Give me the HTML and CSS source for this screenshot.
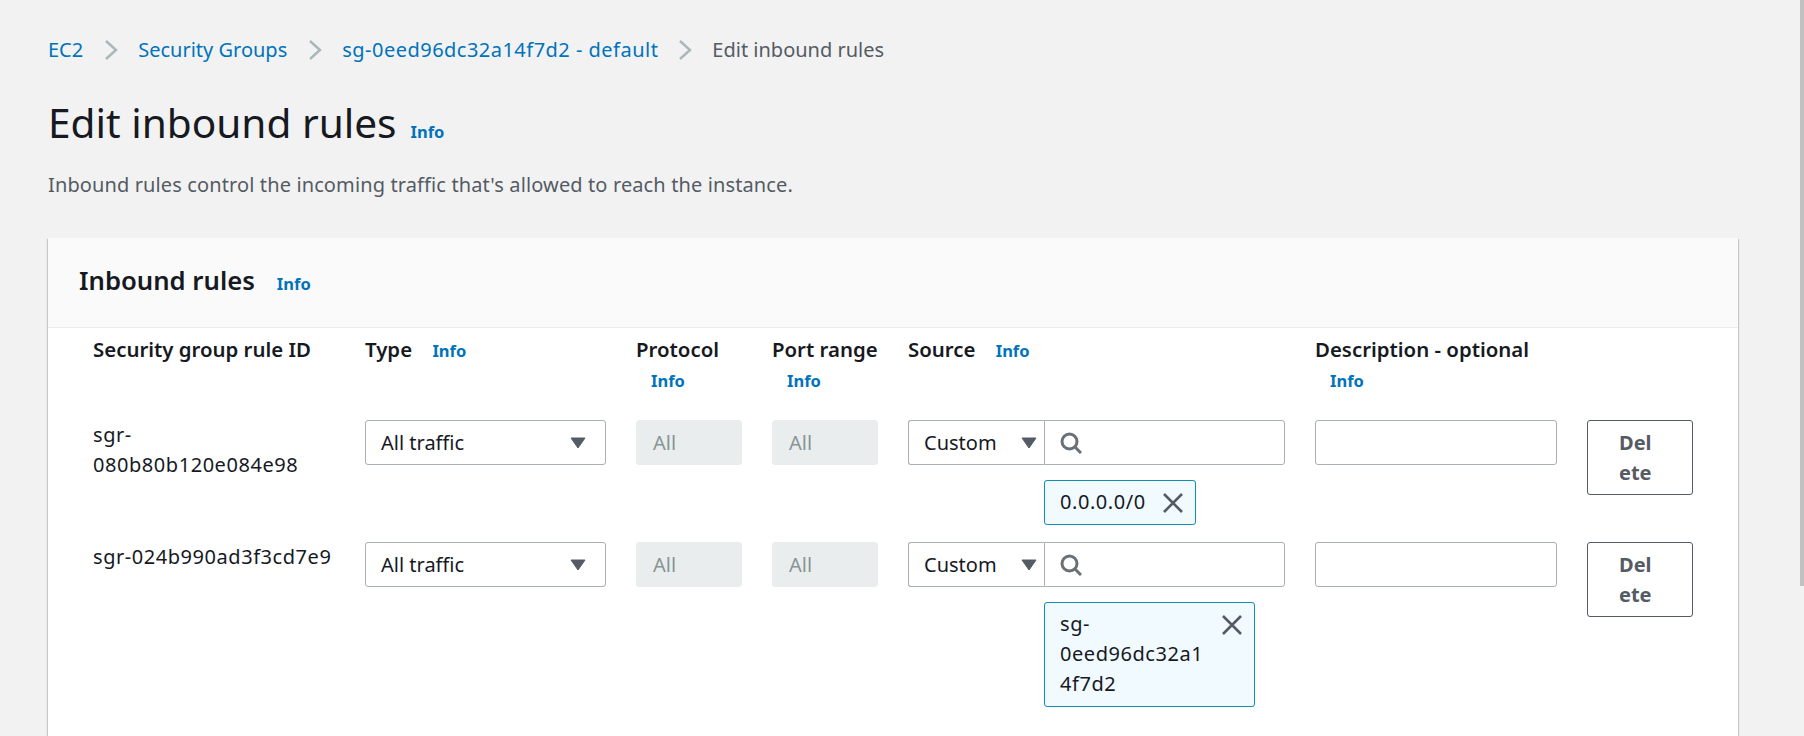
FILE: index.html
```html
<!DOCTYPE html>
<html lang="en">
<head>
  <meta charset="UTF-8">
  <title>Edit inbound rules</title>
  <link rel="stylesheet" href="styles.css">
</head>
<body>
  <div class="scrollbar"></div>
  <main class="page">
    <nav class="breadcrumb">
      <a href="#">EC2</a>
      <svg class="crumb-sep" viewBox="0 0 14 20"><path d="M2 1l10 9-10 9"/></svg>
      <a href="#">Security Groups</a>
      <svg class="crumb-sep" viewBox="0 0 14 20"><path d="M2 1l10 9-10 9"/></svg>
      <a href="#" class="id">sg-0eed96dc32a14f7d2 - default</a>
      <svg class="crumb-sep" viewBox="0 0 14 20"><path d="M2 1l10 9-10 9"/></svg>
      <span>Edit inbound rules</span>
    </nav>

    <div class="page-title">
      <h1>Edit inbound rules</h1>
      <a href="#" class="info">Info</a>
    </div>
    <p class="page-desc">Inbound rules control the incoming traffic that's allowed to reach the instance.</p>

    <section class="card">
      <header class="card-header">
        <h2>Inbound rules</h2>
        <a href="#" class="info">Info</a>
      </header>
      <div class="rules">
        <div class="head">Security group rule ID</div>
        <div class="head">Type <a href="#" class="info">Info</a></div>
        <div class="head">Protocol <a href="#" class="info wrapped">Info</a></div>
        <div class="head">Port range <a href="#" class="info wrapped">Info</a></div>
        <div class="head">Source <a href="#" class="info">Info</a></div>
        <div class="head">Description - optional <a href="#" class="info wrapped">Info</a></div>
        <div class="head"></div>

        <div class="rule-id id">sgr-080b80b120e084e98</div>
        <div class="field select">All traffic
          <svg class="arrow" viewBox="0 0 16 12"><path d="M1 1h14l-7 10z"/></svg>
        </div>
        <div class="field disabled">All</div>
        <div class="field disabled">All</div>
        <div class="source">
          <div class="source-inputs">
            <div class="field select custom">Custom
              <svg class="arrow" viewBox="0 0 16 12"><path d="M1 1h14l-7 10z"/></svg>
            </div>
            <div class="field search">
              <svg class="search-icon" viewBox="0 0 22 22"><circle cx="9.5" cy="9.5" r="7.5"/><path d="M15 15l6 6"/></svg>
            </div>
          </div>
          <div class="tag">
            <span class="tag-text id">0.0.0.0/0</span>
            <svg class="tag-close" viewBox="0 0 20 20"><path d="M1 1l18 18M19 1L1 19"/></svg>
          </div>
        </div>
        <div class="field"></div>
        <button class="delete">Delete</button>

        <div class="rule-id id">sgr-024b990ad3f3cd7e9</div>
        <div class="field select">All traffic
          <svg class="arrow" viewBox="0 0 16 12"><path d="M1 1h14l-7 10z"/></svg>
        </div>
        <div class="field disabled">All</div>
        <div class="field disabled">All</div>
        <div class="source">
          <div class="source-inputs">
            <div class="field select custom">Custom
              <svg class="arrow" viewBox="0 0 16 12"><path d="M1 1h14l-7 10z"/></svg>
            </div>
            <div class="field search">
              <svg class="search-icon" viewBox="0 0 22 22"><circle cx="9.5" cy="9.5" r="7.5"/><path d="M15 15l6 6"/></svg>
            </div>
          </div>
          <div class="tag tag-long">
            <span class="tag-text id">sg-0eed96dc32a14f7d2</span>
            <svg class="tag-close" viewBox="0 0 20 20"><path d="M1 1l18 18M19 1L1 19"/></svg>
          </div>
        </div>
        <div class="field"></div>
        <button class="delete">Delete</button>
      </div>
    </section>
  </main>
</body>
</html>
```

FILE: styles.css
```css
html, body {
  height: 100%;
  overflow: hidden;
}

body {
  margin: 0;
  background: #f2f2f2;
  color: #16191f;
  font-family: "Noto Sans", sans-serif;
  font-size: 20px;
  line-height: 30px;
}

a {
  color: #0073bb;
  text-decoration: none;
}

.id {
  letter-spacing: 0.55px;
}

.scrollbar {
  position: absolute;
  top: 0;
  right: 0;
  width: 4px;
  height: 586px;
  background: #c1c1c1;
}

.page {
  padding: 35px 66px 0 48px;
}

.breadcrumb {
  display: flex;
  align-items: center;
  gap: 20px;
  color: #545b64;
}

.breadcrumb a {
  margin-right: 1px;
}

.breadcrumb a.id {
  margin-right: 0;
  letter-spacing: 0.48px;
}

.crumb-sep {
  width: 14px;
  height: 20px;
  fill: none;
  stroke: #aab7b8;
  stroke-width: 2.4;
}

.page-title {
  display: flex;
  align-items: baseline;
  gap: 14px;
  margin-top: 31px;
}

h1 {
  margin: 0;
  font-size: 40.6px;
  font-weight: 400;
  line-height: 54px;
}

.info {
  font-size: 16.5px;
  font-weight: 700;
  letter-spacing: 0;
}

.page-desc {
  margin: 20px 0 0;
  color: #545b64;
  letter-spacing: 0.12px;
}

.card {
  margin-top: 38px;
  height: 600px;
  background: #fff;
  box-shadow: 0 1px 1px rgba(0, 28, 36, 0.3), 1px 1px 1px rgba(0, 28, 36, 0.15), -1px 1px 1px rgba(0, 28, 36, 0.15);
}

.card-header {
  display: flex;
  align-items: baseline;
  gap: 22px;
  height: 90px;
  padding: 25px 31px 0;
  box-sizing: border-box;
  background: #fafafa;
  border-bottom: 1px solid #eaeded;
}

h2 {
  margin: 0;
  font-size: 25.7px;
  font-weight: 600;
  line-height: 36px;
}

.rules {
  display: grid;
  grid-template-columns: 242px 241px 106px 106px 377px 242px 106px;
  column-gap: 30px;
  align-items: start;
  padding: 6px 0 0 45px;
}

.head {
  font-size: 20.4px;
  font-weight: 600;
  margin-bottom: 24px;
  min-height: 62px;
}

.head .info {
  margin-left: 15px;
}

.head .info.wrapped {
  display: block;
  margin-top: 2px;
  margin-left: 15px;
}

.rule-id {
  margin-bottom: 17px;
}

.field {
  height: 45px;
  box-sizing: border-box;
  display: flex;
  align-items: center;
  padding: 0 15px;
  background: #fff;
  border: 1px solid #a9afb2;
  border-radius: 3px;
}

.select {
  justify-content: space-between;
}

.arrow {
  width: 16px;
  height: 12px;
  fill: #545b64;
  stroke: #545b64;
  stroke-linejoin: round;
  margin-right: 4px;
}

.disabled {
  padding-left: 16px;
  background: #eaeded;
  border-color: #eaeded;
  color: #879596;
}

.source-inputs {
  display: flex;
}

.custom {
  width: 136px;
  flex: none;
  padding-right: 6px;
  border-right: 0;
  border-radius: 3px 0 0 3px;
}

.custom .arrow {
  margin-right: 1px;
}

.search {
  flex: 1;
  border-radius: 0 3px 3px 0;
}

.search-icon {
  width: 22px;
  height: 22px;
  fill: none;
  stroke: #687078;
  stroke-width: 3;
}

.tag {
  display: flex;
  justify-content: space-between;
  box-sizing: border-box;
  width: fit-content;
  margin: 15px 0 17px 136px;
  padding: 6px 12px 7px 15px;
  gap: 17px;
  background: #f1faff;
  border: 1px solid #0f8fb3;
  border-radius: 3px;
}

.tag-long {
  width: 211px;
  gap: 14px;
}

.tag-text {
  min-width: 0;
  overflow-wrap: anywhere;
}

.tag-close {
  flex: none;
  width: 20px;
  height: 20px;
  margin-top: 6px;
  fill: none;
  stroke: #545b64;
  stroke-width: 2.6;
}

.delete {
  width: 106px;
  height: 75px;
  padding: 0 31px;
  background: #fff;
  border: 1px solid #545b64;
  border-radius: 3px;
  color: #545b64;
  font: 700 20px/30px "Noto Sans", sans-serif;
  text-align: left;
  overflow-wrap: anywhere;
}
```
